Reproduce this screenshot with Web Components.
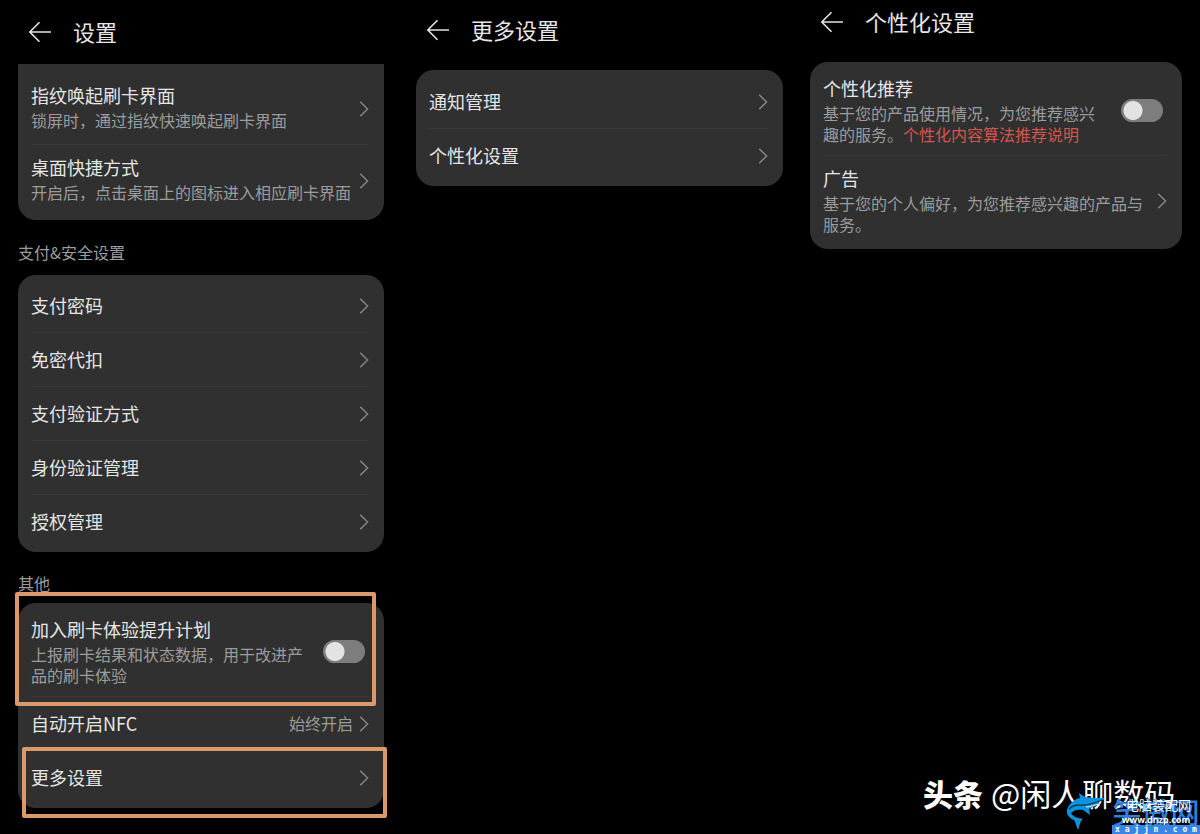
<!DOCTYPE html>
<html lang="zh-CN">
<head>
<meta charset="utf-8">
<meta name="viewport" content="width=device-width, initial-scale=1">
<title>设置</title>
<style>
  body {
    margin: 0;
    background: #000;
    color: #e6e6e6;
    font: 16px/21px "Noto Sans CJK SC", sans-serif;
  }
</style>
</head>
<body>
<settings-app></settings-app>

<template id="t-app">
  <style>
    :host { display: block; position: relative; min-height: 100vh; box-sizing: border-box; }
    main { display: grid; grid-template-columns: 400fr 397fr 403fr; align-items: start; }
    settings-panel.main { padding: 14px 16px 16px 18px; --head-gap: 14px; }
    settings-panel.more { padding: 12px 14px 16px 16px; --head-gap: 22px; }
    settings-panel.personal { padding: 4px 18px 16px 13px; --head-gap: 22px; }
    a { color: #d9534f; text-decoration: none; }
    author-mark { position: absolute; right: 0; bottom: 0; }
  </style>
  <main>
    <settings-panel class="main" heading="设置">
      <settings-card continued>
        <settings-row label="指纹唤起刷卡界面" kind="link">锁屏时，通过指纹快速唤起刷卡界面</settings-row>
        <settings-row label="桌面快捷方式" kind="link">开启后，点击桌面上的图标进入相应刷卡界面</settings-row>
      </settings-card>
      <section-label>支付&amp;安全设置</section-label>
      <settings-card>
        <settings-row label="支付密码" kind="link"></settings-row>
        <settings-row label="免密代扣" kind="link"></settings-row>
        <settings-row label="支付验证方式" kind="link"></settings-row>
        <settings-row label="身份验证管理" kind="link"></settings-row>
        <settings-row label="授权管理" kind="link"></settings-row>
      </settings-card>
      <section-label tight>其他</section-label>
      <settings-card>
        <settings-row label="加入刷卡体验提升计划" kind="toggle" mark="plan">上报刷卡结果和状态数据，用于改进产品的刷卡体验</settings-row>
        <settings-row label="自动开启NFC" kind="link" value="始终开启"></settings-row>
        <settings-row label="更多设置" kind="link" mark="more"></settings-row>
      </settings-card>
    </settings-panel>
    <settings-panel class="more" heading="更多设置">
      <settings-card roomy>
        <settings-row label="通知管理" kind="link"></settings-row>
        <settings-row label="个性化设置" kind="link"></settings-row>
      </settings-card>
    </settings-panel>
    <settings-panel class="personal" heading="个性化设置">
      <settings-card>
        <settings-row label="个性化推荐" kind="toggle">基于您的产品使用情况，为您推荐感兴趣的服务。<a href="#algorithm">个性化内容算法推荐说明</a></settings-row>
        <settings-row label="广告" kind="link">基于您的个人偏好，为您推荐感兴趣的产品与服务。</settings-row>
      </settings-card>
    </settings-panel>
  </main>
  <author-mark></author-mark>
</template>

<template id="t-panel">
  <style>
    :host { display: block; min-width: 0; }
    header { display: flex; align-items: center; gap: 21px; height: 36px; padding-left: 10px; margin-bottom: var(--head-gap); }
    button { display: flex; padding: 0; border: 0; background: none; color: #e4e4e4; cursor: pointer; }
    h1 { margin: 0 0 3px; font-size: 22px; line-height: 32px; font-weight: 400; }
  </style>
  <header>
    <button type="button" aria-label="返回">
      <svg width="24" height="24" viewBox="0 0 24 24" fill="none" stroke="currentColor" stroke-width="1.6"><path d="M23 12H2M11.5 2.200L1.800 12l9.700 9.800"/></svg>
    </button>
    <h1></h1>
  </header>
  <slot></slot>
</template>

<template id="t-card">
  <style>
    :host { display: block; padding: 4px 15px 4px 13px; border-radius: 18px; background: #303030; }
    :host([roomy]) { padding-top: 5px; }
    :host([continued]) { padding-top: 9px; border-radius: 0 0 18px 18px; }
    ::slotted(settings-row:not(:last-child)) { border-bottom: 1px solid #393939; }
  </style>
  <slot></slot>
</template>

<template id="t-label">
  <style>
    :host { display: block; padding: 22px 0 12px; color: #9c9c9c; }
    :host([tight]) { padding: 21px 0 9px; }
  </style>
  <slot></slot>
</template>

<template id="t-row">
  <style>
    :host { display: block; position: relative; }
    .row {
      display: flex; align-items: center; gap: 6px; width: 100%; min-height: 53px;
      box-sizing: border-box; margin: 0; padding: 0; border: 0; background: none;
      color: inherit; font: inherit; text-align: left; cursor: pointer;
    }
    .row.detailed { min-height: 71px; padding: 10px 0; }
    .text { flex: 1; min-width: 0; }
    .detailed .text { align-self: flex-start; }
    .title { display: block; font-size: 18px; line-height: 25px; }
    .desc { display: block; margin-top: 2px; color: #9c9c9c; }
    .value { color: #9c9c9c; }
    .chevron { flex: none; color: #888; }
    input {
      appearance: none; flex: none; width: 42px; height: 23px; margin: 0 4px 0 10px;
      border-radius: 12px; cursor: pointer;
      background: radial-gradient(circle at 12px 50%, #e3e3e3 9px, #7d7d7d 10px);
    }
    input:checked { background: radial-gradient(circle at 30px 50%, #fff 9px, #3f7ff0 10px); }
    :host([mark])::after { content: ""; position: absolute; z-index: 1; border: 4px solid #db9868; border-radius: 2px; pointer-events: none; }
    :host([mark="plan"])::after { inset: -15px -7px -10px -16px; }
    :host([mark="more"])::after { inset: -4px -18px -14px -9px; }
  </style>
</template>

<template id="t-author">
  <style>
    :host { display: block; width: 280px; height: 60px; color: #fff; }
    .author { position: absolute; left: 3px; top: -1px; display: flex; align-items: center; gap: 8px; font-size: 30px; line-height: 40px; white-space: nowrap; }
    .author b { font-weight: 900; }
    .author span { font-size: 31px; font-weight: 400; }
    svg { position: absolute; left: 146px; top: 19px; }
    .site { position: absolute; right: 0; bottom: 0; width: 88px; text-align: center; white-space: nowrap; }
    .brand { display: block; font-size: 29px; line-height: 30px; font-weight: 500; color: #2f7fe0; margin-bottom: -11px; }
    .name { position: absolute; left: 14px; top: 1px; font-size: 13px; line-height: 16px; }
    .url { display: block; position: relative; font: bold 9px/10px "Noto Sans", sans-serif; }
    .bar { display: block; position: relative; background: #3a86e4; font: bold 8px/9px "DejaVu Sans Mono", monospace; }
  </style>
  <div class="author"><b>头条</b><span>@闲人聊数码</span></div>
  <svg width="42" height="38" viewBox="0 0 42 38" aria-hidden="true">
    <path fill="#0d93dc" d="M1 17C3 10 9 6 14 5L13 0L19 4C26 5 31 5 39 5C37 7 35 8 32 9L34 11C30 13 26 14 23 16L24 22C21 20 19 18 17 17C12 16 8 17 5 20C7 24 12 25 17 26C14 28 14 32 12 37C10 33 10 30 8 27C3 25 0 21 1 17Z"/>
    <path fill="none" stroke="#042a45" stroke-width="1.200" d="M3 16C10 9 17 14 24 11C28 10 31 9 36 7"/>
    <path fill="none" stroke="#e8f4fa" d="M20 14C25 14 28 12 33 11"/>
  </svg>
  <div class="site">
    <span class="brand">笑傲网</span>
    <span class="name">电脑装配网</span>
    <span class="url">www.dnzp.com</span>
    <span class="bar">x a j j n . c o m</span>
  </div>
</template>

<script>
  class TemplateElement extends HTMLElement {
    connectedCallback() {
      if (this.shadowRoot) return;
      this.attachShadow({ mode: "open" });
      this.shadowRoot.append(document.getElementById(this.constructor.template).content.cloneNode(true));
      this.render();
    }
    render() {}
  }

  class SettingsRow extends TemplateElement {
    static template = "t-row";
    render() {
      const toggle = this.getAttribute("kind") === "toggle";
      const detailed = this.textContent.trim() !== "";
      const row = document.createElement(toggle ? "div" : "button");
      if (!toggle) row.type = "button";
      row.className = detailed ? "row detailed" : "row";
      const value = this.getAttribute("value");
      row.innerHTML = `
        <span class="text">
          ${toggle ? '<label class="title" for="switch"></label>' : '<span class="title"></span>'}
          ${detailed ? '<span class="desc"><slot></slot></span>' : ""}
        </span>
        ${value ? `<span class="value">${value}</span>` : ""}
        ${toggle
          ? '<input id="switch" type="checkbox" role="switch">'
          : '<svg class="chevron" width="10" height="18" viewBox="0 0 10 18" fill="none" stroke="currentColor" stroke-width="1.4" aria-hidden="true"><path d="M1.200 1.800L8.600 9l-7.400 7.200"/></svg>'}`;
      row.querySelector(".title").textContent = this.getAttribute("label");
      this.shadowRoot.append(row);
    }
  }

  class SettingsPanel extends TemplateElement {
    static template = "t-panel";
    render() { this.shadowRoot.querySelector("h1").textContent = this.getAttribute("heading"); }
  }
  class SettingsCard extends TemplateElement { static template = "t-card"; }
  class SectionLabel extends TemplateElement { static template = "t-label"; }
  class AuthorMark extends TemplateElement { static template = "t-author"; }
  class SettingsApp extends TemplateElement { static template = "t-app"; }

  customElements.define("settings-row", SettingsRow);
  customElements.define("settings-card", SettingsCard);
  customElements.define("section-label", SectionLabel);
  customElements.define("settings-panel", SettingsPanel);
  customElements.define("author-mark", AuthorMark);
  customElements.define("settings-app", SettingsApp);
</script>
</body>
</html>
